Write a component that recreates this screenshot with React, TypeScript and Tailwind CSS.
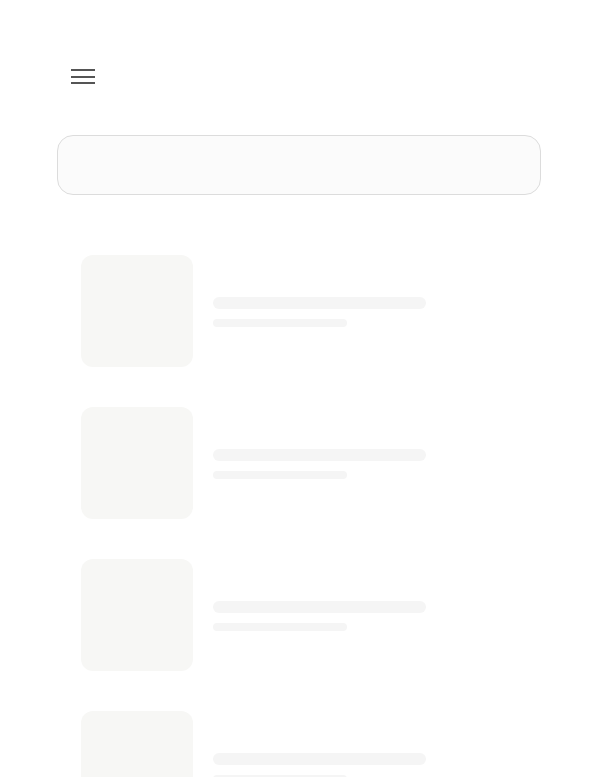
import React from "react";

function SkeletonRow() {
  return (
    <div className="flex items-center gap-5">
      <div className="size-[112px] shrink-0 rounded-xl bg-[#f7f7f5]" />
      <div className="flex flex-col gap-[10px] pt-[2px]">
        <div className="h-3 w-[213px] rounded-full bg-[#f5f5f5]" />
        <div className="h-2 w-[134px] rounded-full bg-[#f5f5f5]" />
      </div>
    </div>
  );
}

export default function App() {
  return (
    <div className="min-h-screen bg-white pt-[69px]" style={{ fontFamily: "Inter, sans-serif" }}>
      {/* Menu toggle */}
      <div className="pl-[71px]">
        <button type="button" aria-label="Open menu" className="flex w-6 flex-col gap-[4.5px]">
          <span className="h-[2px] w-6 bg-[#555]" />
          <span className="h-[2px] w-6 bg-[#555]" />
          <span className="h-[2px] w-6 bg-[#555]" />
        </button>
      </div>

      {/* Search placeholder */}
      <div className="ml-[57px] mt-[51px] h-[60px] w-[484px] rounded-2xl border border-[#dcdcdc] bg-[#fbfbfb]" />

      {/* Loading list */}
      <div className="ml-[81px] mt-[60px] flex flex-col gap-10">
        <SkeletonRow />
        <SkeletonRow />
        <SkeletonRow />
        <SkeletonRow />
      </div>
    </div>
  );
}
